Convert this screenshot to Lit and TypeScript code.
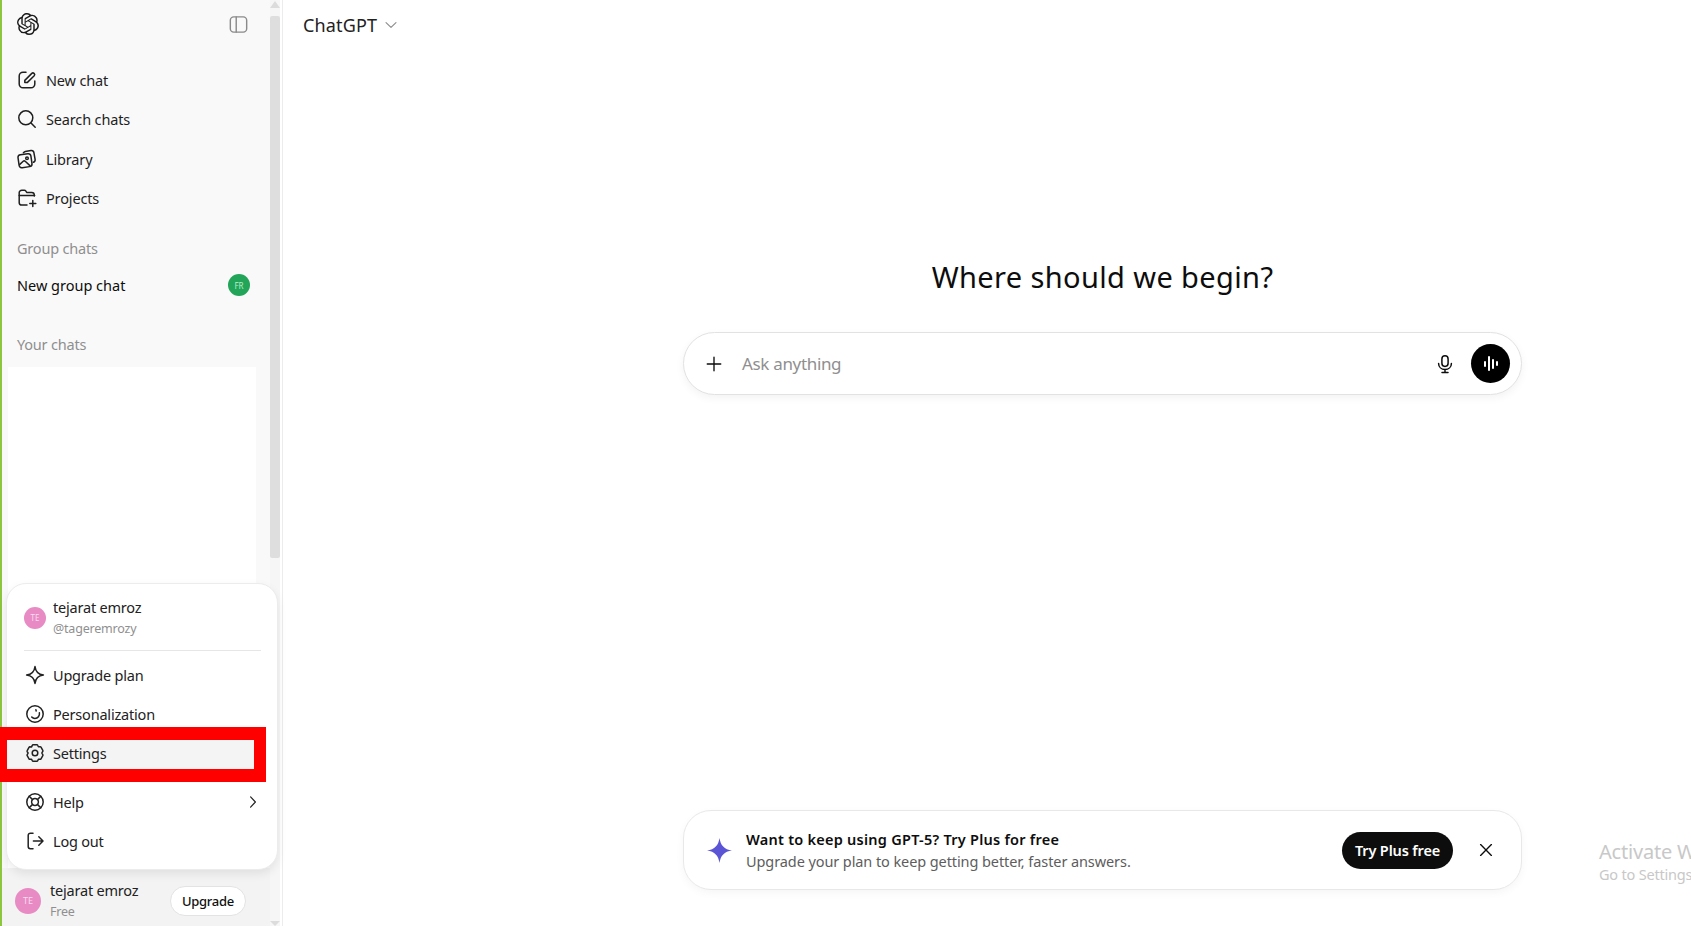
import { LitElement, html, css, svg } from "lit";
import { customElement } from "lit/decorators.js";

const ic = (body: unknown, size = 20, cls = "") =>
  html`<svg class="ic ${cls}" width=${size} height=${size} viewBox="0 0 20 20" fill="none" stroke="currentColor" stroke-width="1.5" stroke-linecap="round" stroke-linejoin="round">${body}</svg>`;

const logo = html`<svg width="22" height="22" viewBox="0 0 24 24" fill="#1a1a1a"><path d="M22.2819 9.8211a5.9847 5.9847 0 0 0-.5157-4.9108 6.0462 6.0462 0 0 0-6.5098-2.9A6.0651 6.0651 0 0 0 4.9807 4.1818a5.9847 5.9847 0 0 0-3.9977 2.9 6.0462 6.0462 0 0 0 .7427 7.0966 5.98 5.98 0 0 0 .511 4.9107 6.051 6.051 0 0 0 6.5146 2.9001A5.9847 5.9847 0 0 0 13.2599 24a6.0557 6.0557 0 0 0 5.7718-4.2058 5.9894 5.9894 0 0 0 3.9977-2.9001 6.0557 6.0557 0 0 0-.7475-7.0729zm-9.022 12.6081a4.4755 4.4755 0 0 1-2.8764-1.0408l.1419-.0804 4.7783-2.7582a.7948.7948 0 0 0 .3927-.6813v-6.7369l2.02 1.1686a.071.071 0 0 1 .038.052v5.5826a4.504 4.504 0 0 1-4.4945 4.4944zm-9.6607-4.1254a4.4708 4.4708 0 0 1-.5346-3.0137l.142.0852 4.783 2.7582a.7712.7712 0 0 0 .7806 0l5.8428-3.3685v2.3324a.0804.0804 0 0 1-.0332.0615L9.74 19.9502a4.4992 4.4992 0 0 1-6.1408-1.6464zM2.3408 7.8956a4.485 4.485 0 0 1 2.3655-1.9728V11.6a.7664.7664 0 0 0 .3879.6765l5.8144 3.3543-2.0201 1.1685a.0757.0757 0 0 1-.071 0l-4.8303-2.7865A4.504 4.504 0 0 1 2.3408 7.872zm16.5963 3.8558L13.1038 8.364 15.1192 7.2a.0757.0757 0 0 1 .071 0l4.8303 2.7913a4.4944 4.4944 0 0 1-.6765 8.1042v-5.6772a.79.79 0 0 0-.407-.667zm2.0107-3.0231l-.142-.0852-4.7735-2.7818a.7759.7759 0 0 0-.7854 0L9.409 9.2297V6.8974a.0662.0662 0 0 1 .0284-.0615l4.8303-2.7866a4.4992 4.4992 0 0 1 6.6802 4.66zM8.3065 12.863l-2.02-1.1638a.0804.0804 0 0 1-.038-.0567V6.0742a4.4992 4.4992 0 0 1 7.3757-3.4537l-.142.0805L8.704 5.459a.7948.7948 0 0 0-.3927.6813zm1.0976-2.3654l2.602-1.4998 2.6069 1.4998v2.9994l-2.5974 1.4997-2.6067-1.4997Z"/></svg>`;

const icons = {
  toggle: svg`<rect x="1.4" y="2" width="17.2" height="16" rx="3.6"/><path d="M7.6 2v16"/>`,
  edit: svg`<path d="M9 2.2H6A3.8 3.8 0 0 0 2.2 6v8A3.8 3.8 0 0 0 6 17.800h8a3.800 3.800 0 0 0 3.800-3.800v-3"/><path d="M7.800 12.600v-2.200l7-7a1.600 1.600 0 0 1 2.200 0l.200.200a1.600 1.600 0 0 1 0 2.200l-7 6.800z"/>`,
  search: svg`<circle cx="8.800" cy="8.800" r="7"/><path d="M14 14l4.200 4.200"/>`,
  library: svg`<path d="M6.400 3.800l.400-.400a2.600 2.600 0 0 1 1.500-.900l5.600-1a2.600 2.600 0 0 1 3 2.100l1.200 6.700a2.600 2.600 0 0 1-1.700 2.900"/><rect x="1.500" y="5.200" width="13" height="13" rx="2.800" transform="rotate(-8 8 11.700)"/><circle cx="10" cy="9.200" r="1.300"/><path d="M2.800 15.400l3.400-3.100a1.500 1.500 0 0 1 2 0l4.700 4.300"/>`,
  projects: svg`<path d="M10 17H4.800a2.600 2.600 0 0 1-2.600-2.600V4.800a2.600 2.600 0 0 1 2.600-2.600h2.600a1.600 1.600 0 0 1 1.300.700l1 1.500h5a2.600 2.600 0 0 1 2.600 2.600V8"/><path d="M2.200 7.600h15.400"/><path d="M15.800 12.600v6M12.800 15.600h6"/>`,
  sparkle: svg`<path d="M10 1.600c.6 5 3.400 7.800 8.400 8.400-5 .6-7.800 3.400-8.400 8.400-.6-5-3.400-7.800-8.400-8.400 5-.6 7.800-3.400 8.400-8.400z"/>`,
  person: svg`<circle cx="10" cy="10" r="8.200"/><path d="M10.900 5.800l.300 1.200"/><path d="M14.400 8.800c.500 2.900-1.500 5.600-4.500 5.600-1.300 0-2.400-.500-3.200-1.400"/>`,
  gear: svg`<path d="M8.200 1.700h3.600a1 1 0 0 1 .9.600l.7 1.500 1.700-.1a1 1 0 0 1 .9.500l1.800 3.100a1 1 0 0 1 0 1L17 9.700a1 1 0 0 0 0 .600l.8 1.400a1 1 0 0 1 0 1L16 15.800a1 1 0 0 1-.9.500l-1.700-.1-.7 1.500a1 1 0 0 1-.9.600H8.200a1 1 0 0 1-.9-.600l-.7-1.500-1.700.1a1 1 0 0 1-.9-.500L2.200 12.700a1 1 0 0 1 0-1l.8-1.400a1 1 0 0 0 0-.600l-.8-1a1 1 0 0 1 0-1L4 4.300a1 1 0 0 1 .9-.500l1.700.1.700-1.500a1 1 0 0 1 .9-.700z"/><circle cx="10" cy="10" r="2.800"/>`,
  help: svg`<circle cx="10" cy="10" r="8.200"/><circle cx="10" cy="10" r="3.400"/><path d="M4.200 4.200l3.400 3.400M15.800 4.200l-3.400 3.400M4.200 15.800l3.400-3.400M15.800 15.800l-3.400-3.400"/>`,
  logout: svg`<path d="M8 2.200H5.400a2.200 2.200 0 0 0-2.200 2.200v11.200a2.200 2.200 0 0 0 2.200 2.200H8"/><path d="M8.400 10h9.400M13.800 5.800l4.200 4.200-4.200 4.200"/>`,
  chev: svg`<path d="M7 3.600l6 6.400-6 6.400"/>`,
  down: svg`<path d="M3.800 7l6.200 6 6.200-6"/>`,
  plus: svg`<path d="M10 2.500v15M2.500 10h15"/>`,
  mic: svg`<rect x="6.900" y="1.800" width="6.200" height="10.600" rx="3.100"/><path d="M3.600 9.400c0 3.600 2.800 6 6.400 6s6.400-2.400 6.400-6M10 15.400v3M7 18.400h6"/>`,
  close: svg`<path d="M4 4l12 12M16 4L4 16"/>`,
};

const row = (icon: unknown, label: string, cls = "") =>
  html`<div class="mrow ${cls}">${ic(icon, 20)}<span>${label}</span></div>`;

@customElement("app-root")
export class AppRoot extends LitElement {
  static styles = css`
    :host {
      display: block;
      height: 926px;
      width: 1691px;
      overflow: hidden;
      position: relative;
      font-family: "Noto Sans", "Open Sans", "Liberation Sans", sans-serif;
      color: #0d0d0d;
      font-size: 14px;
      background: #fff;
    }
    * { box-sizing: border-box; }
    .ic { flex: none; display: block; }
    .page { display: flex; height: 100%; }
    .sidebar {
      width: 283px;
      flex: none;
      display: flex;
      border-left: 2px solid #8cc63f;
      border-right: 1px solid #ececec;
      position: relative;
      background: #f9f9f9;
    }
    .side-main { width: 268px; flex: none; display: flex; flex-direction: column; height: 100%; }
    .rail {
      width: 10px;
      flex: none;
      background: #f6f6f6;
      display: flex;
      flex-direction: column;
      align-items: center;
      justify-content: space-between;
    }
    .thumb { width: 10px; height: 542px; background: #dedede; border-radius: 2px; margin-top: 8px; }
    .rail-top { display: flex; flex-direction: column; align-items: center; }
    .arrow { width: 0; height: 0; border-left: 5px solid transparent; border-right: 5px solid transparent; }
    .arrow.up { border-bottom: 7px solid #dcdcdc; margin-top: 1px; }
    .arrow.dn { border-top: 5px solid #dcdcdc; margin-bottom: 0; }
    .edge { width: 2px; flex: none; background: #fff; }

    .top { display: flex; justify-content: space-between; align-items: center; padding: 0 22px 0 15px; height: 48px; flex: none; }
    .top .l { display: block; margin-top: 3px; }
    .top .t { color: #8a8a8a; }
    .nav { display: flex; flex-direction: column; padding: 12px 0 0 15px; flex: none; }
    .nitem { height: 39.5px; display: flex; align-items: center; gap: 9px; font-size: 14.5px; color: #1f1f1f; letter-spacing: -0.15px; }
    .sect { color: #8f8f8f; font-size: 14.5px; padding-left: 15px; letter-spacing: -0.2px; line-height: 20px; }
    .sect.g { margin-top: 20px; }
    .sect.y { margin-top: 38px; }
    .gchat { display: flex; justify-content: space-between; align-items: center; padding: 0 20px 0 15px; margin-top: 16px; height: 22px; font-size: 14.5px; letter-spacing: 0; }
    .badge { width: 22px; height: 22px; border-radius: 50%; background: #22a559; color: #b9ecc9; font-size: 8px; display: flex; align-items: center; justify-content: center; }
    .list { flex: 1; margin: 13px 14px 0 6px; background: #fff; }
    .foot {
      height: 58px;
      flex: none;
      background: #f3f3f3;
      display: flex;
      align-items: center;
      padding: 7px 24px 0 13px;
      gap: 9px;
    }
    .av { border-radius: 50%; background: #e88ac3; color: #fbdcef; display: flex; align-items: center; justify-content: center; flex: none; }
    .av.b { width: 26px; height: 26px; font-size: 9px; }
    .av.s { width: 22px; height: 22px; font-size: 8px; }
    .who { flex: 1; display: flex; flex-direction: column; letter-spacing: -0.2px; }
    .who b { font-weight: 400; font-size: 14.5px; line-height: 21px; color: #222; }
    .who i { font-style: normal; font-size: 12.5px; line-height: 21px; color: #8f8f8f; }
    .upg { width: 76px; height: 30px; border-radius: 15px; background: #fff; border: 1px solid #e3e3e3; font-size: 13px; font-weight: 500; display: flex; align-items: center; justify-content: center; letter-spacing: -0.25px; color: #111; }

    .menu {
      position: absolute;
      left: 4px;
      bottom: 56px;
      width: 272px;
      height: 287px;
      background: #fff;
      border-radius: 20px;
      border: 1px solid #ececec;
      box-shadow: 0 4px 10px rgba(0, 0, 0, 0.08);
      padding-top: 7px;
      display: flex;
      flex-direction: column;
    }
    .mhead { display: flex; align-items: center; gap: 7px; padding: 3px 16px 0 17px; height: 50px; flex: none; }
    .sep { height: 1px; background: #e6e6e6; margin: 9px 16px 4px 17px; flex: none; }
    .mrow { height: 39.2px; flex: none; display: flex; align-items: center; gap: 8px; padding-left: 18px; font-size: 14.5px; letter-spacing: -0.2px; color: #222; }
    .mrow span { flex: 1; }
    .mrow .ch { margin-right: 16px; width: 16px; height: 16px; }
    .mrow.cur { background: #f4f4f4; margin-right: 20px; }
    .gap { height: 10px; flex: none; }

    .redbox { position: absolute; left: 0; top: 727px; width: 266px; height: 55px; border: solid #fe0000; border-width: 13px 12px 13px 7px; pointer-events: none; }

    .main { flex: 1; min-width: 0; display: flex; flex-direction: column; padding-left: 400px; padding-right: 169px; position: relative; height: 100%; }
    .brand { position: absolute; left: 20px; top: 11px; display: flex; align-items: center; gap: 6px; font-size: 18px; color: #222; letter-spacing: 0.15px; line-height: 28px; }
    .brand .ic { color: #8f8f8f; }
    h1 { margin: 254px 0 0; font-weight: 400; font-size: 29px; line-height: 46px; text-align: center; letter-spacing: 0.38px; color: #0d0d0d; }
    .ask { margin-top: 32px; height: 63px; border-radius: 31.500px; border: 1px solid #e2e2e2; box-shadow: 0 3px 8px rgba(0,0,0,0.05); display: flex; align-items: center; padding: 0 11px 0 21px; background: #fff; }
    .ask .ph { flex: 1; color: #8f8f8f; font-size: 17px; margin-left: 19px; letter-spacing: -0.33px; }
    .ask .mic { margin-right: 16px; }
    .voice { width: 39px; height: 39px; border-radius: 50%; background: #000; display: flex; align-items: center; justify-content: center; gap: 2px; }
    .voice s { display: block; width: 2px; background: #fff; border-radius: 1px; }
    .banner { margin-top: auto; margin-bottom: 36px; height: 80px; border-radius: 28px; border: 1px solid #e8e8e8; box-shadow: 0 3px 8px rgba(0,0,0,0.04); display: flex; align-items: center; padding: 0 0 0 23px; gap: 14px; }
    .star { flex: none; }
    .btxt { flex: 1; display: flex; flex-direction: column; }
    .btxt b { font-size: 14.5px; font-weight: 600; line-height: 22px; letter-spacing: 0.25px; color: #0d0d0d; }
    .btxt span { font-size: 14.5px; line-height: 22px; letter-spacing: -0.09px; color: #5d5d5d; }
    .try { width: 111px; height: 37px; border-radius: 19px; background: #0d0d0d; color: #fff; font-weight: 600; font-size: 14.5px; letter-spacing: -0.15px; display: flex; align-items: center; justify-content: center; margin-right: 10px; }
    .x { width: 18px; height: 18px; margin-right: 26px; }

    .activate { position: absolute; left: 1599px; top: 838px; color: #c8c8c8; white-space: nowrap; }
    .activate div:first-child { font-size: 20px; line-height: 27px; letter-spacing: -0.2px; }
    .activate div:last-child { font-size: 14.5px; line-height: 19px; letter-spacing: -0.2px; }
  `;

  render() {
    return html`
      <div class="page">
        <aside class="sidebar">
          <div class="side-main">
            <div class="top"><span class="l">${logo}</span><span class="t">${ic(icons.toggle, 19)}</span></div>
            <nav class="nav">
              <div class="nitem">${ic(icons.edit, 20)}New chat</div>
              <div class="nitem">${ic(icons.search, 20)}Search chats</div>
              <div class="nitem">${ic(icons.library, 20)}Library</div>
              <div class="nitem">${ic(icons.projects, 20)}Projects</div>
            </nav>
            <div class="sect g">Group chats</div>
            <div class="gchat"><span>New group chat</span><span class="badge">FR</span></div>
            <div class="sect y">Your chats</div>
            <div class="list"></div>
            <div class="foot">
              <div class="av b">TE</div>
              <div class="who"><b>tejarat emroz</b><i>Free</i></div>
              <div class="upg">Upgrade</div>
            </div>
          </div>
          <div class="rail">
            <div class="rail-top"><div class="arrow up"></div><div class="thumb"></div></div>
            <div class="arrow dn"></div>
          </div>
          <div class="edge"></div>
          <div class="menu">
            <div class="mhead">
              <div class="av s">TE</div>
              <div class="who"><b>tejarat emroz</b><i>@tageremrozy</i></div>
            </div>
            <div class="sep"></div>
            ${row(icons.sparkle, "Upgrade plan")}
            ${row(icons.person, "Personalization")}
            ${row(icons.gear, "Settings", "cur")}
            <div class="gap"></div>
            <div class="mrow">${ic(icons.help, 20)}<span>Help</span>${ic(icons.chev, 16, "ch")}</div>
            ${row(icons.logout, "Log out")}
          </div>
        </aside>
        <main class="main">
          <div class="brand">ChatGPT ${ic(icons.down, 16)}</div>
          <h1>Where should we begin?</h1>
          <div class="ask">
            ${ic(icons.plus, 18)}
            <span class="ph">Ask anything</span>
            <span class="mic">${ic(icons.mic, 20)}</span>
            <div class="voice"><s style="height:6px"></s><s style="height:15px"></s><s style="height:10px"></s><s style="height:5px"></s></div>
          </div>
          <div class="banner">
            <svg class="star" width="25" height="25" viewBox="0 0 24 24" fill="#5b55d6"><path d="M12 0c1 7 4.600 11 12 12-7.400 1-11 5-12 12-1-7-4.600-11-12-12 7.400-1 11-5 12-12z"/></svg>
            <div class="btxt"><b>Want to keep using GPT-5? Try Plus for free</b><span>Upgrade your plan to keep getting better, faster answers.</span></div>
            <div class="try">Try Plus free</div>
            ${ic(icons.close, 18, "x")}
          </div>
        </main>
      </div>
      <div class="redbox"></div>
      <div class="activate"><div>Activate Windows</div><div>Go to Settings to activate Windows.</div></div>
    `;
  }
}
